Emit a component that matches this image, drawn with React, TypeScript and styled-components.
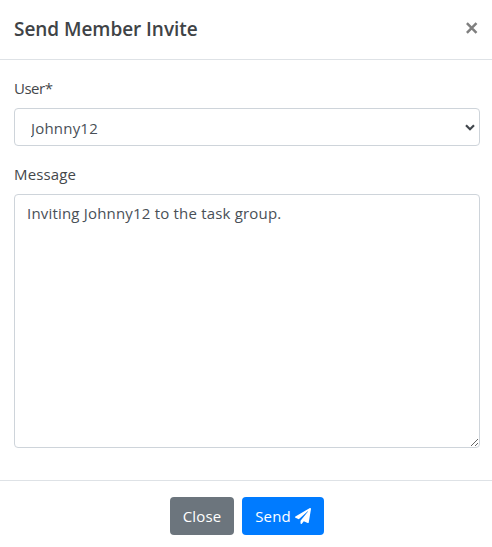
import React, { useState } from "react";
import styled, { createGlobalStyle } from "styled-components";
import { FaPaperPlane } from "react-icons/fa";

const GlobalStyle = createGlobalStyle`
  *, *::before, *::after { box-sizing: border-box; }
  body {
    margin: 0;
    background: #fff;
    color: #44474b;
    font-family: "Segoe UI", "Open Sans", "Noto Sans", sans-serif;
    font-size: 16px;
    line-height: 24px;
    overflow: hidden;
  }
`;

const Modal = styled.form`
  display: flex;
  flex-direction: column;
  width: 492px;
  height: 547px;
  background: #fff;
`;

const Header = styled.header`
  display: flex;
  justify-content: space-between;
  align-items: flex-start;
  height: 60px;
  padding: 14px 14px 0;
  border-bottom: 1px solid #dee2e6;
`;

const Title = styled.h5`
  margin: 0;
  color: #404346;
  font-size: 19px;
  font-weight: 600;
  line-height: 30px;
  letter-spacing: -0.05px;
`;

const CloseIcon = styled.button`
  display: flex;
  margin: 8px 0 0;
  padding: 0;
  border: 0;
  background: none;
  color: #7f7f7f;
`;

const Body = styled.div`
  flex: 1;
  padding: 16px 12px 0 14px;
`;

const Group = styled.div`
  display: flex;
  flex-direction: column;
  margin-bottom: 16px;
`;

const Label = styled.label<{ $tracking: number }>`
  margin-bottom: 8px;
  font-size: 15px;
  letter-spacing: ${(p) => p.$tracking}px;
`;

const SelectBox = styled.div`
  display: grid;
  align-items: center;
  > * { grid-area: 1 / 1; }
  > svg { justify-self: end; margin-right: 5px; pointer-events: none; }
`;

const Select = styled.select`
  appearance: none;
  width: 100%;
  height: 38px;
  padding: 2px 16px 0;
  border: 1px solid #ced4da;
  border-radius: 4px;
  background: #fff;
  color: #495057;
  font: 15px/24px "Segoe UI", "Open Sans", "Noto Sans", sans-serif;
  letter-spacing: 0.2px;
`;

const Message = styled.textarea`
  display: block;
  width: 100%;
  height: 254px;
  padding: 6px 12px;
  border: 1px solid #ced4da;
  border-radius: 4px;
  color: #495057;
  font: 15px/24px "Segoe UI", "Open Sans", "Noto Sans", sans-serif;
  letter-spacing: 0.19px;
  resize: vertical;
`;

const Footer = styled.footer`
  display: flex;
  justify-content: center;
  gap: 8px;
  height: 67px;
  padding: 16px 0 0 2px;
  border-top: 1px solid #dee2e6;
`;

const Button = styled.button<{ $bg: string; $width: number }>`
  display: flex;
  align-items: center;
  justify-content: center;
  gap: 4px;
  width: ${(p) => p.$width}px;
  height: 38px;
  padding: 0;
  border: 0;
  border-radius: 4px;
  background: ${(p) => p.$bg};
  color: #fff;
  font: 15px/24px "Segoe UI", "Open Sans", "Noto Sans", sans-serif;
  letter-spacing: 0.15px;
`;

export default function App() {
  const [message, setMessage] = useState("Inviting Johnny12 to the task group.");
  return (
    <>
      <GlobalStyle />
      <Modal onSubmit={(e) => e.preventDefault()}>
        <Header>
          <Title>Send Member Invite</Title>
          <CloseIcon type="button" aria-label="Close">
            <svg width="12" height="12" viewBox="0 0 12 12" fill="none" stroke="currentColor" strokeWidth="2.5">
              <path d="M0.9 1.2 10.5 10.8M10.5 1.2 0.9 10.8" />
            </svg>
          </CloseIcon>
        </Header>
        <Body>
          <Group>
            <Label htmlFor="user" $tracking={-0.5}>User*</Label>
            <SelectBox>
              <Select id="user">
                <option>Johnny12</option>
              </Select>
              <svg width="10" height="7" viewBox="0 0 10 7" fill="none" stroke="#40464c" strokeWidth="2.2">
                <path d="M1 1.2 5 5.2 9 1.2" />
              </svg>
            </SelectBox>
          </Group>
          <Group>
            <Label htmlFor="message" $tracking={0.15}>Message</Label>
            <Message id="message" spellCheck={false} value={message} onChange={(e) => setMessage(e.target.value)} />
          </Group>
        </Body>
        <Footer>
          <Button type="button" $bg="#6c757d" $width={64}>Close</Button>
          <Button type="submit" $bg="#007bff" $width={82}>
            Send <FaPaperPlane size={16} />
          </Button>
        </Footer>
      </Modal>
    </>
  );
}
